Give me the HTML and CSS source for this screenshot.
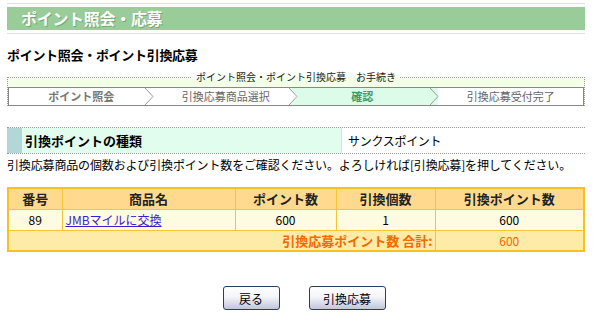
FILE: index.html
```html
<!DOCTYPE html>
<html lang="ja">
<head>
<meta charset="utf-8">
<title>ポイント照会・応募</title>
<link rel="stylesheet" href="styles.css">
</head>
<body>
<div class="page">
  <div class="title">
    <h1 class="title-bar">ポイント照会・応募</h1>
  </div>

  <h2 class="heading">ポイント照会・ポイント引換応募</h2>

  <fieldset class="proc">
    <legend class="proc-legend">ポイント照会・ポイント引換応募　お手続き</legend>
    <ol class="steps">
      <li class="step step-done">ポイント照会<svg class="chev" viewBox="0 0 9 17" preserveAspectRatio="none"><polyline points="0,0 8,8.5 0,17" /></svg></li>
      <li class="step">引換応募商品選択<svg class="chev" viewBox="0 0 9 17" preserveAspectRatio="none"><polyline points="0,0 8,8.5 0,17" /></svg></li>
      <li class="step step-active">確認<svg class="chev" viewBox="0 0 9 17" preserveAspectRatio="none"><polyline points="0,0 8,8.5 0,17" /></svg></li>
      <li class="step">引換応募受付完了</li>
    </ol>
  </fieldset>

  <div class="kind">
    <div class="kind-mark"></div>
    <div class="kind-label">引換ポイントの種類</div>
    <div class="kind-value">サンクスポイント</div>
  </div>

  <p class="note">引換応募商品の個数および引換ポイント数をご確認ください。よろしければ[引換応募]を押してください。</p>

  <table class="items">
    <thead>
      <tr>
        <th class="c-no">番号</th>
        <th class="c-name">商品名</th>
        <th class="c-pt">ポイント数</th>
        <th class="c-qty">引換個数</th>
        <th class="c-total">引換ポイント数</th>
      </tr>
    </thead>
    <tbody>
      <tr class="row-data">
        <td>89</td>
        <td class="name"><a href="#">JMBマイルに交換</a></td>
        <td>600</td>
        <td>1</td>
        <td>600</td>
      </tr>
      <tr class="row-sum">
        <td colspan="4" class="sum-label">引換応募ポイント数 合計:</td>
        <td class="sum-value">600</td>
      </tr>
    </tbody>
  </table>

  <div class="buttons">
    <button class="btn btn-back" type="button">戻る</button>
    <button class="btn btn-apply" type="button">引換応募</button>
  </div>
</div>
</body>
</html>
```

FILE: styles.css
```css
* { box-sizing: border-box; }

body {
  margin: 0;
  background: #fff;
  color: #000;
  font-family: "Noto Sans CJK JP", "Noto Sans", sans-serif;
  font-size: 12px;
}

.page {
  padding: 3px 9px 0 7px;
}

.title {
  border-top: 1px solid #e2e2e2;
  border-bottom: 1px solid #e2e2e2;
  padding: 3px 0;
}

.title-bar {
  margin: 0;
  height: 23px;
  line-height: 23px;
  background: #99cc99;
  color: #fff;
  font-size: 16px;
  font-weight: bold;
  padding-left: 14px;
  letter-spacing: -0.3px;
  text-shadow: 1px 1px 0 #74a874;
}

.heading {
  margin: 12px 0 0;
  font-size: 13px;
  line-height: 18px;
  font-weight: bold;
  letter-spacing: -0.3px;
}

.proc {
  margin: 6px 0 0;
  padding: 0;
  min-inline-size: 0;
  border: 1px dotted #999;
  border-bottom: none;
  background: #f3ffe6;
}

.proc-legend {
  margin: 0 auto;
  padding: 0 4px;
  font-size: 10px;
  line-height: 14px;
  color: #222;
}

.steps {
  list-style: none;
  margin: 3px 0 0;
  padding: 0;
  display: flex;
  height: 19px;
  border: 1px solid #888;
  background: #fff;
}

.step {
  position: relative;
  flex: 1 1 0;
  text-align: center;
  font-size: 11px;
  line-height: 17px;
  color: #666;
}

.step-done {
  font-weight: bold;
  color: #777;
}

.step-active {
  color: #3a9a6a;
  font-weight: bold;
  background: #dcfbe8;
  margin-left: -8px;
  padding-right: 4px;
  clip-path: polygon(0 0, calc(100% - 1px) 0, 100% 50%, calc(100% - 1px) 100%, 0 100%, 8px 50%);
}

.chev {
  position: absolute;
  top: 0;
  right: 0;
  width: 9px;
  height: 17px;
  fill: none;
  stroke: #999;
  stroke-width: 1;
}

.kind {
  margin-top: 21px;
  display: flex;
  height: 27px;
  border-top: 1px dotted #999;
  border-bottom: 1px dotted #999;
}

.kind-mark {
  width: 15px;
  background: #b3d6d6;
}

.kind-label {
  width: 320px;
  background: #e0fdee;
  font-size: 13px;
  font-weight: bold;
  line-height: 25px;
  padding-left: 3px;
  border-right: 1px solid #cde6dc;
}

.kind-value {
  flex: 1;
  line-height: 25px;
  padding-left: 6px;
  letter-spacing: -0.3px;
}

.note {
  margin: 2px 0 0;
  line-height: 17px;
  letter-spacing: -0.15px;
}

.items {
  margin-top: 14px;
  width: 578px;
  border-collapse: collapse;
  border: 2px solid #f7c21e;
}

.items th,
.items td {
  border: 1px solid #f5c537;
  height: 21px;
  padding: 0 4px;
  text-align: center;
}

.items th {
  background: #ffda8e;
  font-size: 13px;
  font-weight: bold;
  color: #222;
}

.c-no { width: 54px; }
.c-name { width: 173px; }
.c-pt { width: 101px; }
.c-qty { width: 99px; }

.row-data td {
  background: #fffbe1;
  font-size: 12px;
}

.items td.name {
  text-align: left;
  padding-left: 3px;
}

.name a {
  color: #3c1ccc;
  text-decoration: underline;
}

.row-sum td {
  background: #ffeba8;
  color: #f26a00;
}

.items td.sum-label {
  text-align: right;
  font-weight: bold;
  font-size: 13px;
  padding-right: 2px;
}

.sum-value {
  font-size: 12px;
}

.buttons {
  margin-top: 34px;
  display: flex;
  justify-content: center;
  gap: 29px;
  padding-left: 16px;
}

.btn {
  height: 24px;
  border: 1px solid #2a3f5f;
  border-radius: 3px;
  background: linear-gradient(#ffffff 0%, #f4f4fa 45%, #c4c4dc 100%);
  font-family: "Noto Sans CJK JP", sans-serif;
  font-size: 12px;
  color: #000;
  padding: 0;
}

.btn-back { width: 57px; }
.btn-apply { width: 77px; }
```
